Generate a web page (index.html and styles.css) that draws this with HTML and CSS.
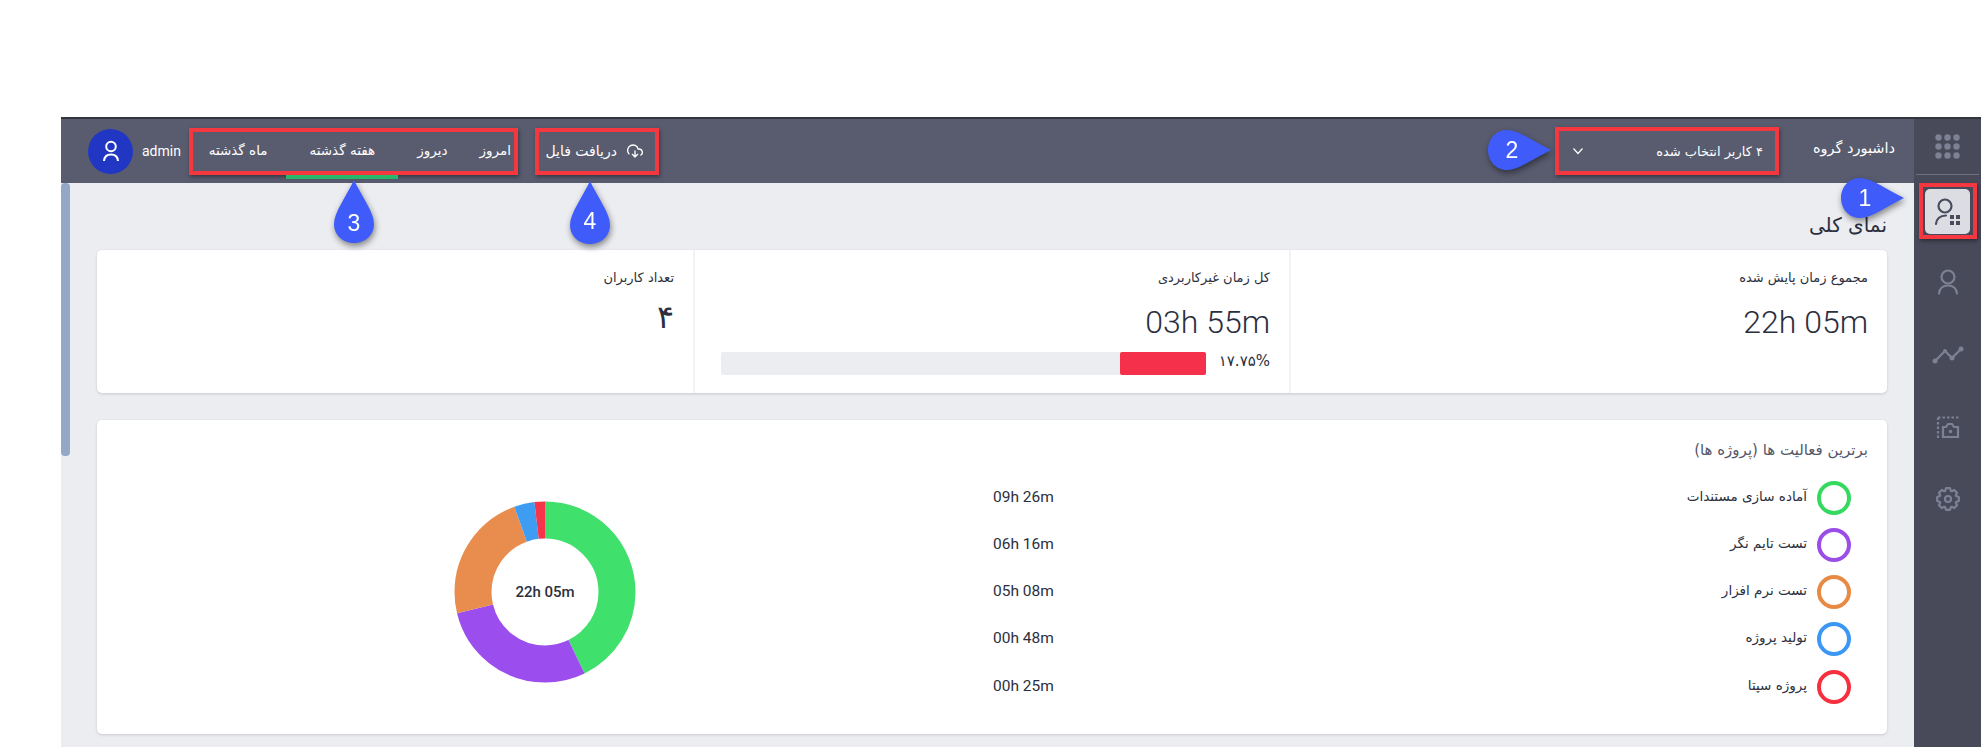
FILE: index.html
```html
<!DOCTYPE html>
<html dir="rtl" lang="fa">
<head>
    <meta charset="utf-8">
    <title>داشبورد گروه</title>
    <link rel="stylesheet" href="styles.css">
</head>
<body>
    <div class="app">
        <aside class="sidebar">
            <div class="side-top">
                <svg class="dots" width="27" height="27" viewBox="0 0 27 27">
                    <circle cx="4.5" cy="4.5" r="3.2"/><circle cx="13.5" cy="4.5" r="3.2"/><circle cx="22.5" cy="4.5" r="3.2"/>
                    <circle cx="4.5" cy="13.5" r="3.2"/><circle cx="13.5" cy="13.5" r="3.2"/><circle cx="22.5" cy="13.5" r="3.2"/>
                    <circle cx="4.5" cy="22.5" r="3.2"/><circle cx="13.5" cy="22.5" r="3.2"/><circle cx="22.5" cy="22.5" r="3.2"/>
                </svg>
            </div>
            <div class="side-slot">
                <div class="mark side-mark">
                    <div class="side-active">
                        <svg width="45" height="45" viewBox="0 0 45 45" fill="none" stroke="#4a4c5e" stroke-width="2.2">
                            <circle cx="20" cy="17" r="6.5"/>
                            <path d="M11 35c.5-5 4-8.500 10-8.500" stroke-linecap="round"/>
                            <path d="M25 26h4v4h-4zM31 26h4v4h-4zM25 32h4v4h-4zM31 32h4v4h-4z" fill="#4a4c5e" stroke="none"/>
                        </svg>
                    </div>
                </div>
            </div>
            <div class="side-slot">
                <svg class="side-icon" width="28" height="28" viewBox="0 0 28 28">
                    <circle cx="14" cy="8" r="6.5"/>
                    <path d="M5 24.500c.5-5 4-8 9-8s8.500 3 9 8" stroke-linecap="round"/>
                </svg>
            </div>
            <div class="side-slot">
                <svg class="side-icon" width="32" height="20" viewBox="0 0 32 20">
                    <path d="M3 16l10-10 7 7 9-9"/>
                    <circle class="solid" cx="3" cy="16" r="2.5"/><circle class="solid" cx="13" cy="6" r="2"/>
                    <circle class="solid" cx="20" cy="13" r="2.5"/><circle class="solid" cx="29" cy="4" r="2.5"/>
                </svg>
            </div>
            <div class="side-slot">
                <svg class="side-icon" width="24" height="24" viewBox="0 0 24 24">
                    <path d="M2 2.500H23M2 2.500V23" stroke-dasharray="2.5 2"/>
                    <path d="M7 12h3l2-3h4l2 3h4v10H7z"/>
                    <circle class="solid" cx="14.5" cy="16.5" r="1.8"/>
                </svg>
            </div>
            <div class="side-slot">
                <svg class="side-icon" width="28" height="28" viewBox="-14 -14 28 28">
                    <path stroke-linejoin="round" d="M8.08-2.94 10.83-1.91 10.83 1.91 8.08 2.94 7.79 3.63 9.01 6.31 6.31 9.01 3.63 7.79 2.94 8.08 1.91 10.83-1.91 10.83-2.94 8.08-3.63 7.79-6.31 9.01-9.01 6.31-7.79 3.63-8.08 2.94-10.83 1.91-10.83-1.91-8.08-2.94-7.79-3.63-9.01-6.31-6.31-9.01-3.63-7.79-2.94-8.08-1.91-10.83 1.91-10.83 2.94-8.08 3.63-7.79 6.31-9.01 9.01-6.31 7.79-3.63z"/>
                    <circle cx="0" cy="0" r="3"/>
                </svg>
            </div>
        </aside>

        <div class="main">
            <header class="topbar">
                <div class="page-name">داشبورد گروه</div>
                <div class="mark user-select">
                    <span>۴ کاربر انتخاب شده</span>
                    <svg width="12" height="8" viewBox="0 0 12 8" fill="none" stroke="#fff" stroke-width="1.2"><path d="M1.5 1.5 6 6.500l4.500-5"/></svg>
                </div>
                <div class="mark download">
                    <svg width="16" height="16" viewBox="0 0 24 24" fill="none" stroke="#fff" stroke-width="2" stroke-linecap="round" stroke-linejoin="round">
                        <path d="M8 17l4 4 4-4M12 12v9"/>
                        <path d="M20.88 18.09A5 5 0 0 0 18 9h-1.26A8 8 0 1 0 3 16.29"/>
                    </svg>
                    <span>دریافت فایل</span>
                </div>
                <nav class="mark range-tabs">
                    <a class="tab">امروز</a>
                    <a class="tab">دیروز</a>
                    <a class="tab tab-active">هفته گذشته</a>
                    <a class="tab">ماه گذشته</a>
                </nav>
                <div class="account">
                    <span class="account-name" dir="ltr">admin</span>
                    <div class="avatar">
                        <svg width="20" height="22" viewBox="0 0 20 22" fill="none" stroke="#fff" stroke-width="2">
                            <circle cx="10" cy="6.5" r="4.8"/>
                            <path d="M3 21c.3-4 3-6.500 7-6.500s6.700 2.500 7 6.500"/>
                        </svg>
                    </div>
                </div>
            </header>

            <div class="content">
                <div class="scroll-thumb"></div>
                <h1 class="section-title">نمای کلی</h1>

                <section class="card stats">
                    <div class="stat">
                        <div class="stat-label">مجموع زمان پایش شده</div>
                        <div class="stat-value" dir="ltr">22h 05m</div>
                    </div>
                    <div class="stat">
                        <div class="stat-label">کل زمان غیرکاربردی</div>
                        <div class="stat-value" dir="ltr">03h 55m</div>
                        <div class="idle">
                            <span class="idle-percent">۱۷.۷۵%</span>
                            <div class="idle-track"><div class="idle-fill"></div></div>
                        </div>
                    </div>
                    <div class="stat">
                        <div class="stat-label">تعداد کاربران</div>
                        <div class="stat-value stat-count">۴</div>
                    </div>
                </section>

                <section class="card projects">
                    <h2 class="projects-title">برترین فعالیت ها (پروژه ها)</h2>
                    <div class="projects-body">
                        <ul class="legend">
                            <li class="legend-row">
                                <span class="ring ring-green"></span>
                                <span class="legend-name">آماده سازی مستندات</span>
                                <span class="legend-time" dir="ltr">09h 26m</span>
                            </li>
                            <li class="legend-row">
                                <span class="ring ring-purple"></span>
                                <span class="legend-name">تست تایم نگر</span>
                                <span class="legend-time" dir="ltr">06h 16m</span>
                            </li>
                            <li class="legend-row">
                                <span class="ring ring-orange"></span>
                                <span class="legend-name">تست نرم افزار</span>
                                <span class="legend-time" dir="ltr">05h 08m</span>
                            </li>
                            <li class="legend-row">
                                <span class="ring ring-blue"></span>
                                <span class="legend-name">تولید پروژه</span>
                                <span class="legend-time" dir="ltr">00h 48m</span>
                            </li>
                            <li class="legend-row">
                                <span class="ring ring-red"></span>
                                <span class="legend-name">پروژه سپتا</span>
                                <span class="legend-time" dir="ltr">00h 25m</span>
                            </li>
                        </ul>
                        <div class="donut-wrap">
                            <svg class="donut" width="182" height="182" viewBox="0 0 182 182" fill="none" stroke-width="37">
                                <g transform="rotate(-90 91 91)">
                                    <circle cx="91" cy="91" r="72" pathLength="1323" stroke="#3fe06c" stroke-dasharray="566 1323"/>
                                    <circle cx="91" cy="91" r="72" pathLength="1323" stroke="#9c4ded" stroke-dasharray="376 1323" stroke-dashoffset="-566"/>
                                    <circle cx="91" cy="91" r="72" pathLength="1323" stroke="#e88d4e" stroke-dasharray="308 1323" stroke-dashoffset="-942"/>
                                    <circle cx="91" cy="91" r="72" pathLength="1323" stroke="#3e9cf3" stroke-dasharray="48 1323" stroke-dashoffset="-1250"/>
                                    <circle cx="91" cy="91" r="72" pathLength="1323" stroke="#f6344a" stroke-dasharray="25 1323" stroke-dashoffset="-1298"/>
                                </g>
                            </svg>
                            <div class="donut-total" dir="ltr">22h 05m</div>
                        </div>
                    </div>
                </section>
            </div>
        </div>
    </div>

    <svg class="pin pin-1" viewBox="-45 -45 90 90"><path d="M42 0C25-8 10-20-2-20-14-20-21-10-21 0-21 10-14 20-2 20 10 20 25 8 42 0Z"/><text x="3" y="8">1</text></svg>
    <svg class="pin pin-2" viewBox="-45 -45 90 90"><path d="M42 0C25-8 10-20-2-20-14-20-21-10-21 0-21 10-14 20-2 20 10 20 25 8 42 0Z"/><text x="3" y="8">2</text></svg>
    <svg class="pin pin-3" viewBox="-45 -45 90 90"><path transform="rotate(-90)" d="M42 0C25-8 10-20-2-20-14-20-21-10-21 0-21 10-14 20-2 20 10 20 25 8 42 0Z"/><text x="0" y="9">3</text></svg>
    <svg class="pin pin-4" viewBox="-45 -45 90 90"><path transform="rotate(-90)" d="M42 0C25-8 10-20-2-20-14-20-21-10-21 0-21 10-14 20-2 20 10 20 25 8 42 0Z"/><text x="0" y="6">4</text></svg>
</body>
</html>
```

FILE: styles.css
```css
html, body {
    margin: 0;
    height: 747px;
    overflow: hidden;
    background: #fff;
}
body {
    position: relative;
    font-family: "DejaVu Sans", sans-serif;
    color: #2c2f40;
}
ul { list-style: none; margin: 0; padding: 0; }

.app {
    display: flex;
    margin: 117px 0 0 61px;
    height: 630px;
    border-top: 2px solid #35363d;
    box-sizing: border-box;
}

/* red annotation frames */
.mark {
    border: 4px solid #f5383f;
    box-shadow: 1px 2px 4px rgba(0,0,0,0.4);
    box-sizing: border-box;
}

/* right rail */
.sidebar {
    width: 67px;
    flex: none;
    background: #484a5a;
    display: flex;
    flex-direction: column;
    align-items: center;
}
.side-top {
    width: 63px;
    height: 55px;
    border-bottom: 1px solid #6e7183;
    display: flex;
    align-items: center;
    justify-content: center;
}
.dots { fill: #7e8193; }
.side-slot {
    height: 72px;
    flex: none;
    display: flex;
    align-items: center;
    justify-content: center;
}
.side-mark {
    width: 58px;
    height: 56px;
    display: flex;
    align-items: center;
    justify-content: center;
}
.side-active {
    width: 45px;
    height: 45px;
    background: #dcdde2;
    border-radius: 5px;
}
.side-icon {
    fill: none;
    stroke: #7d8194;
    stroke-width: 2.2;
}
.side-icon .solid { fill: #7d8194; stroke: none; }

.main {
    flex: 1;
    min-width: 0;
    display: flex;
    flex-direction: column;
}

/* top bar */
.topbar {
    height: 64px;
    flex: none;
    background: #595c6f;
    display: flex;
    align-items: center;
    padding: 0 19px 0 27px;
    color: #fff;
    font-size: 13px;
}
.page-name {
    width: 86px;
    margin: 0 0 6px 30px;
    font-size: 14.5px;
    white-space: nowrap;
}
.user-select {
    width: 224px;
    height: 48px;
    display: flex;
    align-items: center;
    justify-content: space-between;
    padding: 0 12px 0 13px;
}
.download {
    width: 124px;
    height: 47px;
    margin-right: auto;
    display: flex;
    align-items: center;
    gap: 10px;
    padding-right: 12px;
    font-size: 14px;
    white-space: nowrap;
}
.range-tabs {
    width: 329px;
    height: 47px;
    margin-right: 17px;
    display: flex;
    align-items: center;
    gap: 42px;
    padding: 0 3px 2px;
    font-size: 13.5px;
    white-space: nowrap;
}
.tab { position: relative; }
.tab:first-child { margin-left: -10px; }
.tab-active::after {
    content: "";
    position: absolute;
    left: 50%;
    margin-left: -56px;
    width: 112px;
    top: 33px;
    height: 4px;
    background: #27b86a;
}
.account {
    display: flex;
    align-items: center;
    gap: 9px;
    margin-right: 8px;
}
.account-name {
    font-family: Roboto, sans-serif;
    font-size: 14px;
}
.avatar {
    width: 45px;
    height: 45px;
    border-radius: 50%;
    background: #2137c4;
    display: flex;
    align-items: center;
    justify-content: center;
}

/* page body */
.content {
    position: relative;
    flex: 1;
    background: #ecedf1;
    padding: 22px 27px 0 36px;
}
.scroll-thumb {
    position: absolute;
    left: 0;
    top: 0;
    width: 9px;
    height: 273px;
    background: #92a8c6;
    border-radius: 4px;
}
.section-title {
    margin: 0;
    height: 45px;
    line-height: 40px;
    font-size: 20px;
    font-weight: normal;
}
.card {
    background: #fff;
    border-radius: 5px;
    box-shadow: 0 1px 3px rgba(0,0,0,0.15);
}
.stats {
    height: 143px;
    display: grid;
    grid-template-columns: 598px 1fr 1fr;
    margin-bottom: 27px;
}
.stat {
    padding: 18px 19px 0;
    border-left: 2px solid #f2f3f6;
}
.stat:last-child { border-left: none; }
.stat-label {
    font-size: 13px;
    line-height: 20px;
}
.stat-value {
    font-family: Roboto, sans-serif;
    font-size: 32px;
    font-weight: 300;
    line-height: 38px;
    margin-top: 15px;
    text-align: right;
}
.stat-count { margin-top: 10px; }
.idle {
    display: flex;
    align-items: center;
    gap: 12px;
    margin-top: 11px;
}
.idle-percent {
    font-size: 15px;
    line-height: 19px;
    margin-top: -4px;
    width: 52px;
    white-space: nowrap;
}
.idle-track {
    width: 485px;
    height: 23px;
    background: #ecedf1;
    border-radius: 2px;
}
.idle-fill {
    width: 86px;
    height: 100%;
    background: #f5304a;
    border-radius: 2px;
}

.projects {
    height: 314px;
    padding: 18px 36px 0 0;
    box-sizing: border-box;
}
.projects-title {
    margin: 0 -17px 12px 0;
    font-size: 15px;
    font-weight: normal;
    line-height: 24px;
    color: #555869;
}
.projects-body { display: flex; }
.legend { width: 858px; flex: none; }
.legend-row {
    height: 47.25px;
    display: flex;
    align-items: center;
    gap: 10px;
    font-size: 13.5px;
}
.ring {
    width: 34px;
    height: 34px;
    border: 4px solid;
    border-radius: 50%;
    box-sizing: border-box;
    flex: none;
}
.ring-green { border-color: #36d95f; }
.ring-purple { border-color: #9b4de8; }
.ring-orange { border-color: #e98a44; }
.ring-blue { border-color: #3a97f3; }
.ring-red { border-color: #f7303f; }
.legend-name { margin-top: -4px; }
.legend-time {
    margin: -2px auto 0 0;
    font-family: Roboto, sans-serif;
    font-size: 15.5px;
}
.donut-wrap {
    position: relative;
    flex: 1;
    display: flex;
    align-items: center;
    justify-content: center;
}
.donut-total {
    position: absolute;
    font-family: Roboto, sans-serif;
    font-size: 15px;
    font-weight: 500;
}

/* numbered callouts */
.pin {
    position: absolute;
    width: 90px;
    height: 90px;
    overflow: visible;
    filter: drop-shadow(1px 3px 3px rgba(0,0,0,0.45));
}
.pin path { fill: #3f5cfb; }
.pin text {
    fill: #fff;
    font-family: "Liberation Sans", sans-serif;
    font-size: 23px;
    text-anchor: middle;
}
.pin-1 { left: 1817px; top: 153px; }
.pin-2 { left: 1464px; top: 105px; }
.pin-3 { left: 309px; top: 177px; }
.pin-4 { left: 545px; top: 178px; }
```
